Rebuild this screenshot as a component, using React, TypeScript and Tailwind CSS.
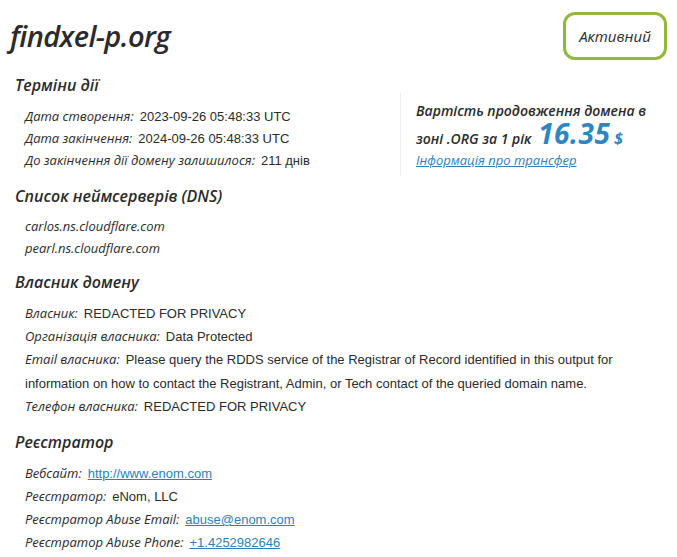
import React from "react";

const head = "font-['Open_Sans',sans-serif] italic";
const val = "font-['Liberation_Sans',sans-serif]";

const Row = ({ label, children, tall }: { label: string; children: React.ReactNode; tall?: boolean }) => (
    <div className={`flex items-baseline text-[13px] text-[#2b2b2b] ${tall ? "h-[23px] leading-[23px]" : "h-[22px] leading-[22px]"}`}>
        <span className={`${head} mr-[6px]`}>{label}:</span>
        <span className={val}>{children}</span>
    </div>
);

const Link = ({ children }: { children: React.ReactNode }) => (
    <a href="#" className="text-[#2e7fb8] underline">
        {children}
    </a>
);

const Heading = ({ children }: { children: React.ReactNode }) => (
    <h2 className={`${head} ml-[15px] text-[16px] font-semibold text-[#2b2b2b]`}>{children}</h2>
);

export default function App() {
    return (
        <div className="w-[677px] h-[557px] bg-white overflow-hidden">
            <div className="flex items-start justify-between pl-[10px] pr-[10px] pt-[12px]">
                <h1 className={`${head} text-[29px] font-semibold leading-[48px] text-[#2b2b2b] tracking-[-0.6px]`}>
                    findxel-p.org
                </h1>
                <div className={`${head} h-[48px] w-[104px] flex items-center justify-center rounded-[12px] border-[3px] border-[#94b83d] text-[15px] font-medium text-[#2b2b2b]`}>
                    Активний
                </div>
            </div>

            <div className="mt-[13px]">
                <Heading>Терміни дії</Heading>
                <div className="flex items-start mt-[8px]">
                    <div className="pl-[25px] w-[400px]">
                        <Row label="Дата створення">2023-09-26 05:48:33 UTC</Row>
                        <Row label="Дата закінчення">2024-09-26 05:48:33 UTC</Row>
                        <Row label="До закінчення дії домену залишилося">211 днів</Row>
                    </div>
                    <div className={`${head} -mt-[12px] -mb-[30px] border-l border-[#eeeeee] pl-[15px] pt-[7px] pb-[6px] text-[14px] font-semibold text-[#2b2b2b]`}>
                        <div className="leading-[22px]">Вартість продовження домена в</div>
                        <div className="leading-[22px]">
                            зоні .ORG за 1 рік{" "}
                            <span className="ml-[3px] text-[28px] font-bold tracking-[0.5px] text-[#2e86c1]">16.35</span>{" "}
                            <span className="text-[16px] font-bold text-[#2e86c1]">$</span>
                        </div>
                        <div className="text-[13px] font-normal leading-[20px]">
                            <Link>Інформація про трансфер</Link>
                        </div>
                    </div>
                </div>
            </div>

            <div className="mt-[13px]">
                <Heading>Список неймсерверів (DNS)</Heading>
                <div className={`${head} pl-[25px] mt-[7px] text-[13px] text-[#2b2b2b] leading-[22px]`}>
                    <div>carlos.ns.cloudflare.com</div>
                    <div>pearl.ns.cloudflare.com</div>
                </div>
            </div>

            <div className="mt-[11px]">
                <Heading>Власник домену</Heading>
                <div className="pl-[25px] mt-[8px] pr-[40px] text-[13px] text-[#2b2b2b]">
                    <Row label="Власник" tall>REDACTED FOR PRIVACY</Row>
                    <Row label="Організація власника" tall>Data Protected</Row>
                    <div className="leading-[23.5px]">
                        <span className={`${head} mr-[6px]`}>Email власника:</span>
                        <span className={val}>
                            Please query the RDDS service of the Registrar of Record identified in this output for
                            information on how to contact the Registrant, Admin, or Tech contact of the queried domain name.
                        </span>
                    </div>
                    <Row label="Телефон власника" tall>REDACTED FOR PRIVACY</Row>
                </div>
            </div>

            <div className="mt-[12px]">
                <Heading>Реєстратор</Heading>
                <div className="pl-[25px] mt-[8px]">
                    <Row label="Вебсайт" tall>
                        <Link>http://www.enom.com</Link>
                    </Row>
                    <Row label="Реєстратор" tall>eNom, LLC</Row>
                    <Row label="Реєстратор Abuse Email" tall>
                        <Link>abuse@enom.com</Link>
                    </Row>
                    <Row label="Реєстратор Abuse Phone" tall>
                        <Link>+1.4252982646</Link>
                    </Row>
                </div>
            </div>
        </div>
    );
}
